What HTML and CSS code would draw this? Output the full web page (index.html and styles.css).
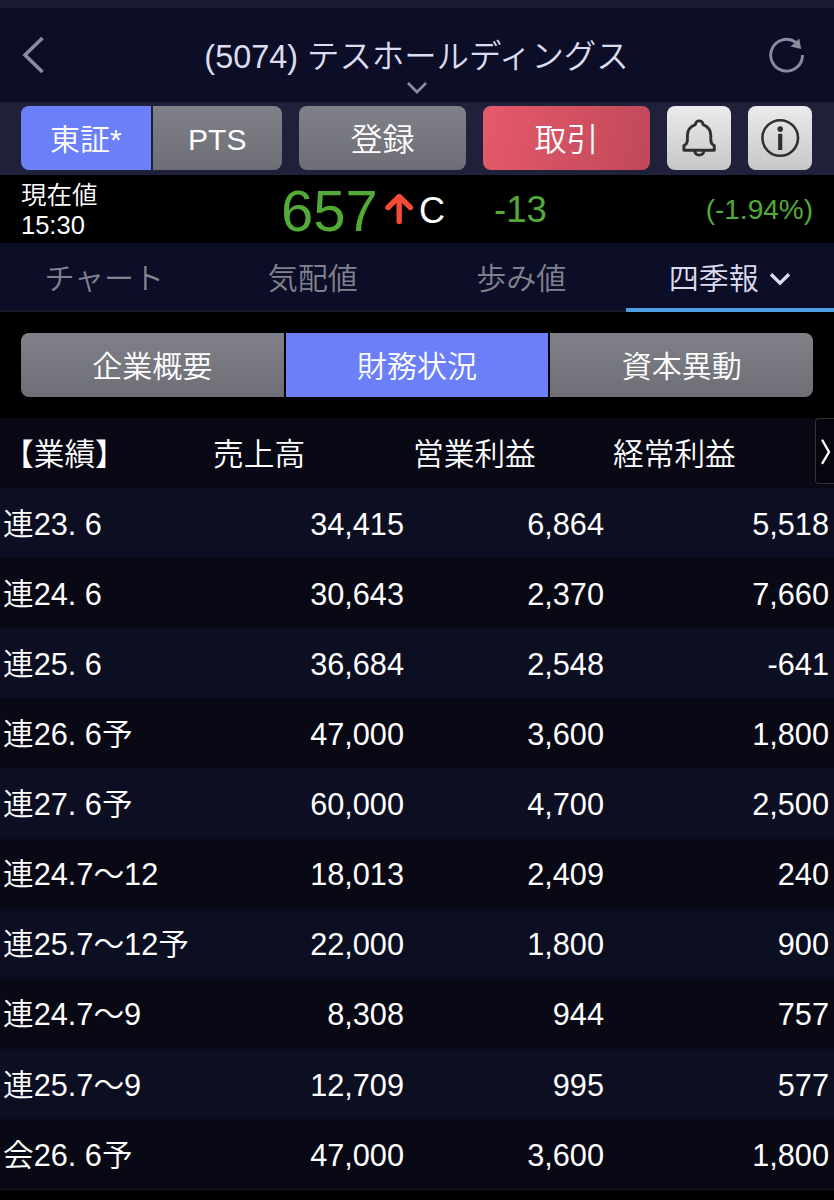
FILE: index.html
```html
<!DOCTYPE html>
<html lang="ja">
<head>
<meta charset="utf-8">
<title>(5074) テスホールディングス</title>
<link rel="stylesheet" href="styles.css">
</head>
<body>
<div class="status-strip"></div>
<header class="header">
  <svg class="back" width="24" height="38" viewBox="0 0 24 38" fill="none" stroke="#8b8b9d" stroke-width="3.6"><path d="M22.5 2 5 19 22.5 36"/></svg>
  <h1 class="title">(5074) テスホールディングス</h1>
  <svg class="reload" width="38" height="38" viewBox="0 0 38 38"><path d="M34.5 19A15.9 15.9 0 1 1 27.8 6.2" fill="none" stroke="#8b8b9d" stroke-width="2.9"/><path d="M31.3 2.4 33.1 12.9 22.6 10.6Z" fill="#8b8b9d"/></svg>
  <svg class="title-chevron" width="22" height="14" viewBox="0 0 22 14" fill="none" stroke="#8b8b9d" stroke-width="2.8"><path d="M2 2 11 11 20 2"/></svg>
</header>
<div class="toolbar">
  <div class="market">
    <button class="btn btn-active">東証*</button>
    <button class="btn">PTS</button>
  </div>
  <button class="btn btn-wide">登録</button>
  <button class="btn btn-wide btn-trade">取引</button>
  <button class="btn btn-icon" aria-label="通知">
    <svg width="64" height="64" viewBox="0 0 64 64" fill="none" stroke="#303033" stroke-width="2.9" stroke-linejoin="round"><path d="M28.4 18.6C28.4 13.6 36 13.6 36 18.6C41.4 20.6 43.8 24.6 43.8 29.5V34C43.8 37 44.8 38.6 47.3 39.6V44.2H16.9V39.6C19.4 38.6 20.4 37 20.4 34V29.5C20.4 24.6 22.8 20.6 28.4 18.6Z"/><path d="M27.6 44.5C27.6 50.6 37 50.6 37 44.5"/></svg>
  </button>
  <button class="btn btn-icon" aria-label="情報">
    <svg width="64" height="64" viewBox="0 0 64 64"><circle cx="32.2" cy="32" r="17.8" fill="none" stroke="#303033" stroke-width="2.6"/><circle cx="32.2" cy="23.1" r="2.8" fill="#303033"/><path d="M32.2 27.8V44" stroke="#303033" stroke-width="4.2"/></svg>
  </button>
</div>
<section class="quote">
  <div class="quote-label"><span>現在値</span><span>15:30</span></div>
  <div class="price">657</div>
  <svg class="arrow" width="30" height="34" viewBox="0 0 30 34" fill="none" stroke="#f44b35" stroke-width="5.4" stroke-linecap="round" stroke-linejoin="round"><path d="M4 15.5 15.2 4.5 26.4 15.5M15.2 5V29.5"/></svg>
  <div class="mark">C</div>
  <div class="change">-13</div>
  <div class="percent">(-1.94%)</div>
</section>
<nav class="tabs">
  <a class="tab">チャート</a>
  <a class="tab">気配値</a>
  <a class="tab">歩み値</a>
  <a class="tab tab-active">四季報<svg width="22" height="16" viewBox="0 0 22 16" fill="none" stroke="#dcdcf0" stroke-width="3.4"><path d="M2 3.2 11 12.2 20 3.2"/></svg></a>
</nav>
<div class="segments">
  <button class="btn">企業概要</button>
  <button class="btn btn-active">財務状況</button>
  <button class="btn">資本異動</button>
</div>
<main class="results">
  <div class="row head"><span>【業績】</span><span>売上高</span><span>営業利益</span><span>経常利益</span></div>
  <div class="row"><span>連23. 6</span><span>34,415</span><span>6,864</span><span>5,518</span></div>
  <div class="row"><span>連24. 6</span><span>30,643</span><span>2,370</span><span>7,660</span></div>
  <div class="row"><span>連25. 6</span><span>36,684</span><span>2,548</span><span>-641</span></div>
  <div class="row"><span>連26. 6予</span><span>47,000</span><span>3,600</span><span>1,800</span></div>
  <div class="row"><span>連27. 6予</span><span>60,000</span><span>4,700</span><span>2,500</span></div>
  <div class="row"><span>連24.7〜12</span><span>18,013</span><span>2,409</span><span>240</span></div>
  <div class="row"><span>連25.7〜12予</span><span>22,000</span><span>1,800</span><span>900</span></div>
  <div class="row"><span>連24.7〜9</span><span>8,308</span><span>944</span><span>757</span></div>
  <div class="row"><span>連25.7〜9</span><span>12,709</span><span>995</span><span>577</span></div>
  <div class="row"><span>会26. 6予</span><span>47,000</span><span>3,600</span><span>1,800</span></div>
  <div class="scroll-next"><svg width="19" height="64" viewBox="0 0 19 64" fill="none" stroke="#fff" stroke-width="2.4" stroke-linecap="round" stroke-linejoin="round"><path d="M6.5 21.5 13 33 6.5 44"/></svg></div>
</main>
</body>
</html>
```

FILE: styles.css
```css
* { box-sizing: border-box; }
body {
  margin: 0;
  width: 834px;
  height: 1200px;
  overflow: hidden;
  background: #000;
  color: #fff;
  font: 350 30px/1 "Liberation Sans", "Noto Sans CJK JP", sans-serif;
}
svg { display: block; flex: none; }
.status-strip { height: 8px; background: #191b34; }
.header {
  position: relative;
  display: flex;
  align-items: center;
  justify-content: space-between;
  height: 94px;
  padding: 0 28px 0 20px;
  background: #0c0d26;
}
.title { margin: 0; padding: 3px 0 0 21px; font-size: 32.4px; font-weight: 350; line-height: 40px; color: #dcdcf0; white-space: nowrap; }
.title-chevron { position: absolute; left: 406px; bottom: 7px; }
.toolbar {
  display: flex;
  gap: 17px;
  height: 73px;
  padding: 4px 21px 5px;
  background: #1f2039;
}
.market { display: flex; gap: 2px; width: 261px; }
.btn {
  display: flex;
  align-items: center;
  justify-content: center;
  flex: 1;
  height: 64px;
  margin: 0;
  padding: 3px 0 0;
  border: 0;
  border-radius: 0;
  background: linear-gradient(#808188, #6d6e76);
  color: #fff;
  font: inherit;
  white-space: nowrap;
}
.btn-active { background: #6b7ff8; }
.market .btn:first-child, .segments .btn:first-child { border-radius: 8px 0 0 8px; }
.market .btn:last-child, .segments .btn:last-child { border-radius: 0 8px 8px 0; }
.toolbar .btn-wide { flex: 0 0 167px; border-radius: 8px; font-size: 32px; }
.toolbar .btn-trade { background: linear-gradient(105deg, #e55a6b, #c04859); }
.toolbar .btn-icon { flex: 0 0 64px; padding: 0; border-radius: 8px; background: linear-gradient(#ebebed, #c7c7ca); }
.quote {
  display: flex;
  align-items: center;
  height: 68px;
  padding: 0 21px;
  color: #52ab37;
}
.quote-label { display: flex; flex-direction: column; width: 260px; color: #fff; font-size: 25.5px; line-height: 30.5px; padding-top: 2px; }
.price { width: 103px; font-size: 58px; padding-top: 4px; }
.arrow { margin-bottom: 1px; }
.mark { width: 80px; padding-left: 5px; font-size: 36px; color: #fff; padding-top: 3px; }
.change { font-size: 36.5px; padding-top: 2px; }
.percent { margin-left: auto; padding-top: 2px; font-size: 28px; }
.tabs { display: flex; height: 69px; background: #0c0d26; }
.tab {
  display: flex;
  align-items: center;
  justify-content: center;
  gap: 10px;
  flex: 1;
  padding-top: 4px;
  border-bottom: 2px solid #181929;
  color: #82828f;
}
.tab-active { padding-top: 6px; border-bottom: 4px solid #509ee2; color: #dcdcf0; }
.segments { display: flex; gap: 2px; padding: 21px 21px; }
.results { position: relative; border-bottom: 1px solid #17171b; font-size: 30.7px; }
.row {
  display: grid;
  grid-template-columns: 204px 200px 200px 225px;
  align-items: center;
  height: 70.1px;
  padding-top: 4px;
  background: #0c0e21;
  text-align: right;
}
.row:nth-child(odd) { background: #080914; }
.row span:first-child { padding-left: 3px; text-align: left; }
.row.head { text-align: left; }
.row.head span { padding-left: 9px; }
.row.head span:first-child { padding-left: 3px; }
.scroll-next {
  position: absolute;
  top: 0;
  right: 0;
  width: 19px;
  height: 66px;
  overflow: hidden;
  border: 1px solid #303039;
  border-right: 0;
  border-radius: 4px 0 0 4px;
  background: #05060d;
}
```
